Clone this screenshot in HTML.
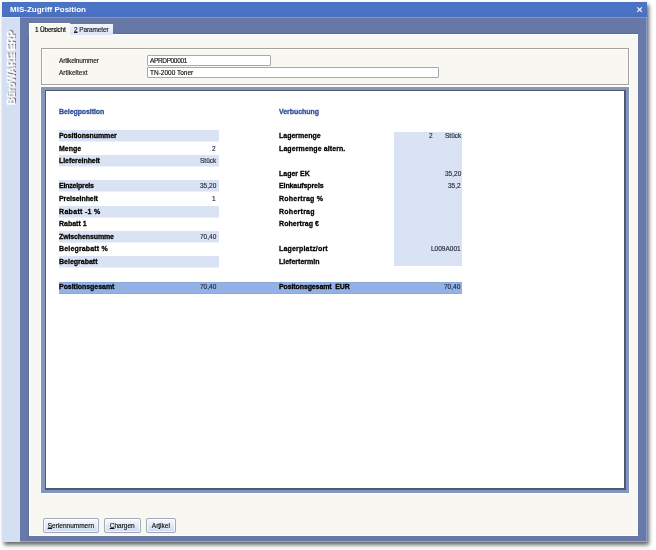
<!DOCTYPE html>
<html><head><meta charset="utf-8"><style>
html,body{margin:0;padding:0;}
body{width:656px;height:550px;position:relative;overflow:hidden;background:#fff;font-family:"Liberation Sans",sans-serif;}
.b{position:absolute;}
u{text-underline-offset:0.3px;text-decoration-thickness:0.8px;}
.t{position:absolute;white-space:nowrap;line-height:1;will-change:transform;-webkit-text-stroke:0.15px currentColor;}
.t[style*="bold"]{-webkit-text-stroke:0.28px currentColor;}
</style></head><body>
<div class="b" style="left:2px;top:2px;width:645px;height:540px;background:#6878a9;box-shadow:2px 3px 4px rgba(0,0,0,0.6);"></div>
<div class="b" style="left:29px;top:18px;width:609px;height:16px;background:linear-gradient(to bottom,#6979a8,#6377a5);box-shadow:inset 0 -1px 0 #5b6d9a;"></div>
<div class="b" style="left:2px;top:2px;width:645px;height:15px;background:linear-gradient(to bottom,#4a74c2,#4a73c8 60%,#4a6fba);"></div>
<div class="b" style="left:2px;top:17px;width:645px;height:1px;background:#7d98cb;"></div>
<div class="b" style="left:646px;top:17px;width:1px;height:525px;background:#8a9ccc;"></div>
<div class="b" style="left:2px;top:541px;width:645px;height:1px;background:#93a6cc;"></div>
<div class="b" style="left:2px;top:17px;width:18px;height:525px;background:#d4dff2;"></div>
<div class="b" style="left:2px;top:17px;width:18px;height:1px;background:#e6edf8;"></div>
<div class="t" style="left:9.80px;top:6px;font-size:8px;font-weight:bold;color:#fff;-webkit-text-stroke:0;">MIS-Zugriff Position</div>
<svg class="b" style="left:635px;top:5px" width="9" height="9" viewBox="0 0 9 9"><path d="M2.3 2.3 L6.9 6.9 M6.9 2.3 L2.3 6.9" stroke="#fff" stroke-width="1.15"/></svg>
<div class="t" style="left:7px;top:105px;font-size:10px;font-weight:bold;color:#fff;transform-origin:0 0;transform:rotate(-90deg) scaleX(0.97);text-shadow:1px 1px 0 #5a6070;line-height:1;-webkit-text-stroke:0.35px #fff;">BüroWARE ERP</div>
<div class="b" style="left:28px;top:35px;width:1px;height:506px;background:#5d6f9c;"></div>
<div class="b" style="left:29px;top:34px;width:609px;height:502px;background:#f8f7f2;border-left:1px solid #fff;border-top:1px solid #fff;border-bottom:1px solid #fff;box-sizing:border-box;"></div>
<div class="b" style="left:29px;top:23px;width:41px;height:12px;background:#f8f7f2;border-top:1px solid #fff;border-left:1px solid #fff;box-sizing:border-box;"></div>
<div class="b" style="left:70px;top:24px;width:43px;height:11px;background:linear-gradient(to bottom,#f3f6fc,#dae3f4);"></div>
<div class="t" style="left:34.70px;top:27px;font-size:6.5px;color:#000;letter-spacing:-0.210px;">1 Übersicht</div>
<div class="t" style="left:73.80px;top:27px;font-size:6.5px;color:#1a1e2a;letter-spacing:-0.120px;"><u>2</u> Parameter</div>
<div class="b" style="left:41px;top:48px;width:588px;height:37px;border:1px solid #a4a39d;box-shadow:inset 1px 1px 0 #fff, 1px 1px 0 #fff;box-sizing:border-box;"></div>
<div class="t" style="left:58.60px;top:58px;font-size:6.5px;color:#222;letter-spacing:-0.175px;">Artikelnummer</div>
<div class="t" style="left:58.60px;top:70px;font-size:6.5px;color:#222;">Artikeltext</div>
<div class="b" style="left:147px;top:55px;width:124px;height:11px;background:#fff;border:1px solid #a8a8a8;border-radius:1px;box-sizing:border-box;"></div>
<div class="b" style="left:147px;top:67px;width:292px;height:11px;background:#fff;border:1px solid #a8a8a8;border-radius:1px;box-sizing:border-box;"></div>
<div class="t" style="left:150.00px;top:58px;font-size:6.5px;color:#111;letter-spacing:-0.356px;">APRDP00001</div>
<div class="t" style="left:150.00px;top:70px;font-size:6.5px;color:#111;">TN-2000 Toner</div>
<div class="b" style="left:40px;top:86px;width:590px;height:408px;background:#fdfdfb;"></div>
<div class="b" style="left:41px;top:87px;width:588px;height:406px;background:#8396bb;"></div>
<div class="b" style="left:45px;top:90px;width:581px;height:400px;background:#4f5a72;"></div>
<div class="b" style="left:46px;top:91px;width:578px;height:397px;background:#fff;"></div>
<div class="t" style="left:59.00px;top:108px;font-size:7px;font-weight:bold;color:#2e4d98;letter-spacing:-0.083px;">Belegposition</div>
<div class="t" style="left:278.80px;top:108px;font-size:7px;font-weight:bold;color:#2e4d98;letter-spacing:-0.056px;">Verbuchung</div>
<div class="b" style="left:58.5px;top:130px;width:160.5px;height:11px;background:#dae3f4;box-shadow:0 1px 0 rgba(218,227,244,0.5);"></div>
<div class="t" style="left:59.00px;top:132px;font-size:7px;font-weight:bold;color:#000;letter-spacing:-0.100px;">Positionsnummer</div>
<div class="t" style="left:59.00px;top:145px;font-size:7px;font-weight:bold;color:#000;">Menge</div>
<div class="t" style="right:440.00px;top:146px;font-size:6.5px;color:#1e2638;">2</div>
<div class="b" style="left:58.5px;top:155px;width:160.5px;height:11px;background:#dae3f4;box-shadow:0 1px 0 rgba(218,227,244,0.5);"></div>
<div class="t" style="left:59.00px;top:157px;font-size:7px;font-weight:bold;color:#000;letter-spacing:-0.058px;">Liefereinheit</div>
<div class="t" style="right:440.00px;top:158px;font-size:6.5px;color:#1e2638;">Stück</div>
<div class="b" style="left:58.5px;top:180px;width:160.5px;height:11px;background:#dae3f4;box-shadow:0 1px 0 rgba(218,227,244,0.5);"></div>
<div class="t" style="left:59.00px;top:182px;font-size:7px;font-weight:bold;color:#000;letter-spacing:-0.200px;">Einzelpreis</div>
<div class="t" style="right:440.00px;top:183px;font-size:6.5px;color:#1e2638;">35,20</div>
<div class="t" style="left:59.00px;top:195px;font-size:7px;font-weight:bold;color:#000;letter-spacing:-0.073px;">Preiseinheit</div>
<div class="t" style="right:440.00px;top:196px;font-size:6.5px;color:#1e2638;">1</div>
<div class="b" style="left:58.5px;top:206px;width:160.5px;height:11px;background:#dae3f4;box-shadow:0 1px 0 rgba(218,227,244,0.5);"></div>
<div class="t" style="left:59.00px;top:208px;font-size:7px;font-weight:bold;color:#000;letter-spacing:0.320px;">Rabatt -1 %</div>
<div class="t" style="left:59.00px;top:220px;font-size:7px;font-weight:bold;color:#000;">Rabatt 1</div>
<div class="b" style="left:58.5px;top:231px;width:160.5px;height:11px;background:#dae3f4;box-shadow:0 1px 0 rgba(218,227,244,0.5);"></div>
<div class="t" style="left:59.00px;top:233px;font-size:7px;font-weight:bold;color:#000;letter-spacing:-0.117px;">Zwischensumme</div>
<div class="t" style="right:440.00px;top:234px;font-size:6.5px;color:#1e2638;">70,40</div>
<div class="t" style="left:59.00px;top:245px;font-size:7px;font-weight:bold;color:#000;letter-spacing:0.167px;">Belegrabatt %</div>
<div class="b" style="left:58.5px;top:256px;width:160.5px;height:11px;background:#dae3f4;box-shadow:0 1px 0 rgba(218,227,244,0.5);"></div>
<div class="t" style="left:59.00px;top:258px;font-size:7px;font-weight:bold;color:#000;">Belegrabatt</div>
<div class="b" style="left:394px;top:131.5px;width:67.5px;height:134.8px;background:#dae3f4;"></div>
<div class="t" style="left:278.80px;top:132px;font-size:7px;font-weight:bold;color:#000;">Lagermenge</div>
<div class="t" style="right:223.70px;top:133px;font-size:6.5px;color:#1e2638;">2</div>
<div class="t" style="right:195.00px;top:133px;font-size:6.5px;color:#1e2638;">Stück</div>
<div class="t" style="left:278.80px;top:145px;font-size:7px;font-weight:bold;color:#000;letter-spacing:0.100px;">Lagermenge altern.</div>
<div class="t" style="left:278.80px;top:170px;font-size:7px;font-weight:bold;color:#000;">Lager EK</div>
<div class="t" style="right:195.00px;top:171px;font-size:6.5px;color:#1e2638;">35,20</div>
<div class="t" style="left:278.80px;top:182px;font-size:7px;font-weight:bold;color:#000;letter-spacing:-0.108px;">Einkaufspreis</div>
<div class="t" style="right:195.00px;top:183px;font-size:6.5px;color:#1e2638;">35,2</div>
<div class="t" style="left:278.80px;top:195px;font-size:7px;font-weight:bold;color:#000;letter-spacing:0.230px;">Rohertrag %</div>
<div class="t" style="left:278.80px;top:208px;font-size:7px;font-weight:bold;color:#000;letter-spacing:0.263px;">Rohertrag</div>
<div class="t" style="left:278.80px;top:220px;font-size:7px;font-weight:bold;color:#000;letter-spacing:0.070px;">Rohertrag €</div>
<div class="t" style="left:278.80px;top:245px;font-size:7px;font-weight:bold;color:#000;letter-spacing:0.185px;">Lagerplatz/ort</div>
<div class="t" style="right:195.50px;top:246px;font-size:6.5px;color:#1e2638;">L009A001</div>
<div class="t" style="left:278.80px;top:258px;font-size:7px;font-weight:bold;color:#000;">Liefertermin</div>
<div class="b" style="left:58.9px;top:282px;width:402.70000000000005px;height:12px;background:#93b1e4;box-shadow:inset 0 1px 0 #8aa8dc, inset 0 -1px 0 #8aa8dc;"></div>
<div class="t" style="left:59.00px;top:283px;font-size:7px;font-weight:bold;color:#000;letter-spacing:-0.043px;">Positionsgesamt</div>
<div class="t" style="right:440.00px;top:284px;font-size:6.5px;color:#1e2638;">70,40</div>
<div class="t" style="left:279.30px;top:283px;font-size:7px;font-weight:bold;color:#000;letter-spacing:-0.111px;">Positonsgesamt&nbsp; EUR</div>
<div class="t" style="right:195.50px;top:284px;font-size:6.5px;color:#1e2638;">70,40</div>
<div class="b" style="left:43.2px;top:518px;width:55.8px;height:15px;border:1px solid #a2aab6;border-radius:2px;background:linear-gradient(to bottom,#f7f9fe,#e4ebf8 45%,#cddaf3);box-shadow:inset 0 0 0 1px rgba(255,255,255,0.7);box-sizing:border-box;"></div>
<div class="t" style="left:43.2px;width:55.8px;top:523px;font-size:6.5px;color:#111;text-align:center;"><u>S</u>eriennummern</div>
<div class="b" style="left:104.1px;top:518px;width:36.5px;height:15px;border:1px solid #a2aab6;border-radius:2px;background:linear-gradient(to bottom,#f7f9fe,#e4ebf8 45%,#cddaf3);box-shadow:inset 0 0 0 1px rgba(255,255,255,0.7);box-sizing:border-box;"></div>
<div class="t" style="left:104.1px;width:36.5px;top:523px;font-size:6.5px;color:#111;text-align:center;"><u>C</u>hargen</div>
<div class="b" style="left:146px;top:518px;width:29.69999999999999px;height:15px;border:1px solid #a2aab6;border-radius:2px;background:linear-gradient(to bottom,#f7f9fe,#e4ebf8 45%,#cddaf3);box-shadow:inset 0 0 0 1px rgba(255,255,255,0.7);box-sizing:border-box;"></div>
<div class="t" style="left:146px;width:29.69999999999999px;top:523px;font-size:6.5px;color:#111;text-align:center;">Ar<u>t</u>ikel</div>
</body></html>
